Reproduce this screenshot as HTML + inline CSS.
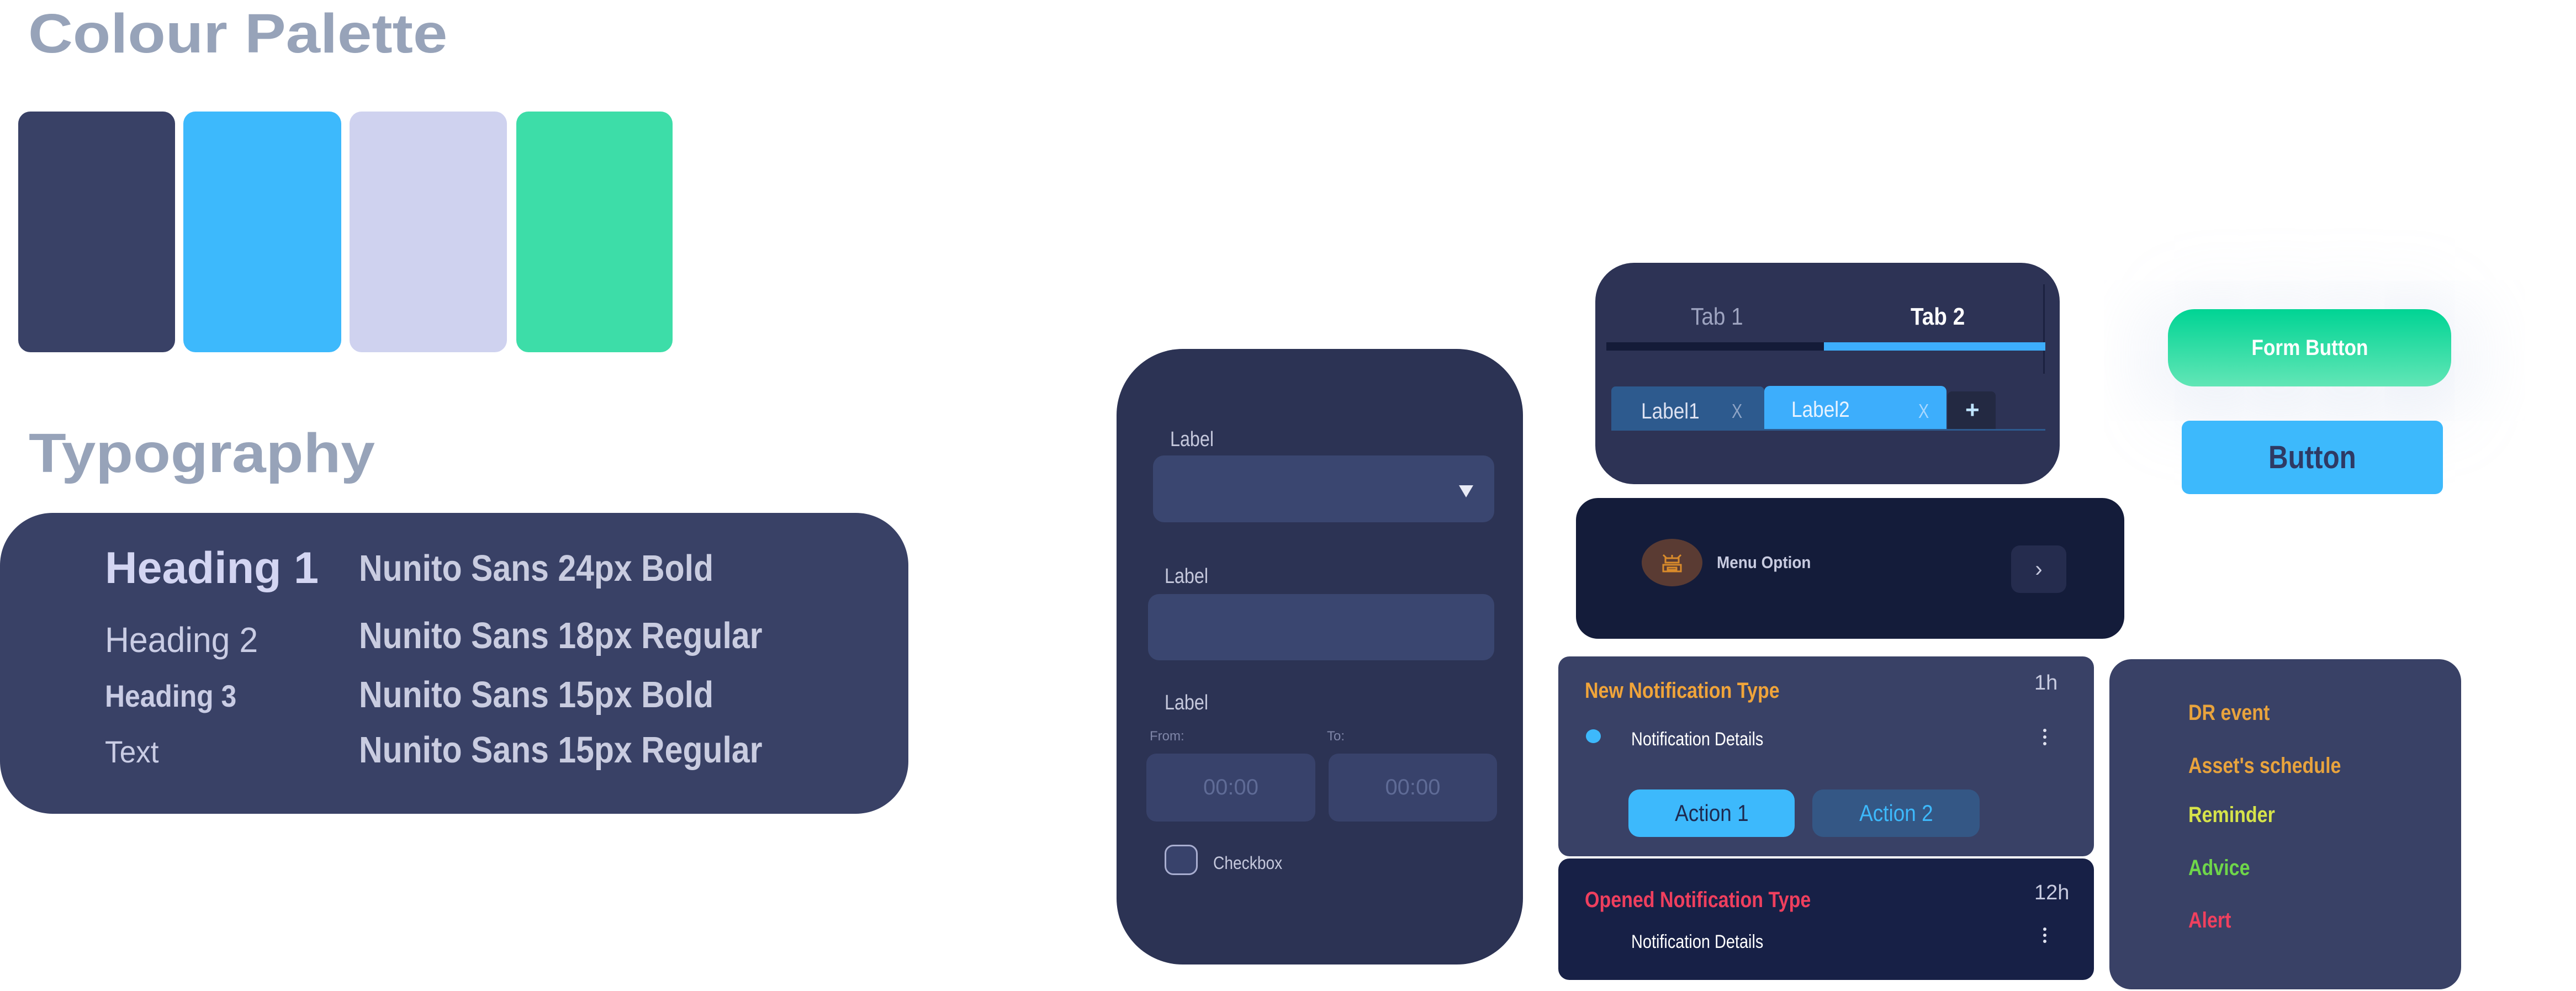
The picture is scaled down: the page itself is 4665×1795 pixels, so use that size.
<!DOCTYPE html>
<html style="width:4665px;height:1795px;overflow:hidden"><head><meta charset="utf-8"><style>
*{margin:0;padding:0;box-sizing:border-box}
body{width:4665px;height:1795px;background:#fff;position:relative;overflow:hidden;font-family:"Liberation Sans",sans-serif}
.a{position:absolute}
.t{position:absolute;line-height:1;white-space:nowrap;transform-origin:0 0}
.b{font-weight:bold}
.c{display:flex;align-items:center;justify-content:center}
</style></head><body>

<div class="t b" style="left:51px;top:11px;font-size:100px;color:#97a3b9;transform:scaleX(1.12)">Colour Palette</div>
<div class="a" style="left:33px;top:202px;width:284px;height:436px;background:#394166;border-radius:22px"></div>
<div class="a" style="left:332px;top:202px;width:286px;height:436px;background:#3db9fc;border-radius:22px"></div>
<div class="a" style="left:633px;top:202px;width:285px;height:436px;background:#cfd2ef;border-radius:22px"></div>
<div class="a" style="left:935px;top:202px;width:283px;height:436px;background:#3ddda8;border-radius:22px"></div>

<div class="t b" style="left:52px;top:771px;font-size:100px;color:#97a3b9;transform:scaleX(1.11)">Typography</div>
<div class="a" style="left:0;top:929px;width:1645px;height:545px;background:#394166;border-radius:95px"></div>
<div class="t b" style="left:190px;top:989px;font-size:81px;color:#d3d5f2">Heading 1</div>
<div class="t" style="left:190px;top:1127px;font-size:64px;color:#c9cce4;transform:scaleX(0.95)">Heading 2</div>
<div class="t b" style="left:190px;top:1233px;font-size:56px;color:#c9cce4;transform:scaleX(0.89)">Heading 3</div>
<div class="t" style="left:190px;top:1334px;font-size:56px;color:#c9cce4;transform:scaleX(0.95)">Text</div>
<div class="t b" style="left:650px;top:996px;font-size:67px;color:#c9cce0;transform:scaleX(0.88)">Nunito Sans 24px Bold</div>
<div class="t b" style="left:650px;top:1118px;font-size:67px;color:#c9cce0;transform:scaleX(0.88)">Nunito Sans 18px Regular</div>
<div class="t b" style="left:650px;top:1225px;font-size:67px;color:#c9cce0;transform:scaleX(0.88)">Nunito Sans 15px Bold</div>
<div class="t b" style="left:650px;top:1325px;font-size:67px;color:#c9cce0;transform:scaleX(0.88)">Nunito Sans 15px Regular</div>

<!-- form card -->
<div class="a" style="left:2022px;top:632px;width:736px;height:1115px;background:#2c3354;border-radius:120px"></div>
<div class="t" style="left:2119px;top:777px;font-size:38px;color:#c5c8dc;transform:scaleX(0.85)">Label</div>
<div class="a" style="left:2088px;top:825px;width:618px;height:121px;background:#3a4670;border-radius:20px"></div>
<svg class="a" style="left:2642px;top:879px" width="26" height="22"><path d="M0 0H26L13 22Z" fill="#e8eaf5"/></svg>
<div class="t" style="left:2109px;top:1025px;font-size:38px;color:#c5c8dc;transform:scaleX(0.85)">Label</div>
<div class="a" style="left:2079px;top:1076px;width:627px;height:120px;background:#3a4670;border-radius:20px"></div>
<div class="t" style="left:2109px;top:1254px;font-size:38px;color:#c5c8dc;transform:scaleX(0.85)">Label</div>
<div class="t" style="left:2082px;top:1322px;font-size:24px;color:#7f86a8">From:</div>
<div class="t" style="left:2403px;top:1322px;font-size:24px;color:#7f86a8">To:</div>
<div class="a c" style="left:2076px;top:1365px;width:306px;height:123px;background:#38426b;border-radius:18px;font-size:40px;color:#5f6b96">00:00</div>
<div class="a c" style="left:2406px;top:1365px;width:305px;height:123px;background:#38426b;border-radius:18px;font-size:40px;color:#5f6b96">00:00</div>
<div class="a" style="left:2109px;top:1530px;width:60px;height:55px;border:3px solid #a9aed0;border-radius:16px;background:#38426b"></div>
<div class="t" style="left:2197px;top:1547px;font-size:32px;color:#c5c8dc;transform:scaleX(0.88)">Checkbox</div>

<!-- tab card -->
<div class="a" style="left:2889px;top:476px;width:841px;height:401px;background:#2d3355;border-radius:70px"></div>
<div class="a" style="left:3700px;top:515px;width:3px;height:162px;background:#1c2240"></div>
<div class="t" style="left:3062px;top:552px;font-size:44px;color:#9ea4c0;transform:scaleX(0.88)">Tab 1</div>
<div class="t b" style="left:3460px;top:552px;font-size:44px;color:#fff;transform:scaleX(0.88)">Tab 2</div>
<div class="a" style="left:2909px;top:620px;width:394px;height:15px;background:#141b38"></div>
<div class="a" style="left:3303px;top:620px;width:401px;height:15px;background:#3daefc"></div>
<div class="a" style="left:2918px;top:700px;width:277px;height:79px;background:#2d5a8e;border-radius:8px 8px 0 0"></div>
<div class="a" style="left:3195px;top:699px;width:330px;height:80px;background:#3daefc;border-radius:10px 10px 0 0"></div>
<div class="a" style="left:3527px;top:709px;width:87px;height:70px;background:#232942;border-radius:8px 8px 0 0"></div>
<div class="a" style="left:2918px;top:777px;width:786px;height:3px;background:#2d5a8e"></div>
<div class="t" style="left:2972px;top:725px;font-size:40px;color:#dde2f2;transform:scaleX(0.88)">Label1</div>
<div class="t" style="left:3136px;top:727px;font-size:36px;color:#8ea4c6;transform:scaleX(0.8)">X</div>
<div class="t" style="left:3244px;top:722px;font-size:40px;color:#e8f3ff;transform:scaleX(0.88)">Label2</div>
<div class="t" style="left:3474px;top:727px;font-size:36px;color:#a8d8ff;transform:scaleX(0.8)">X</div>
<div class="t b" style="left:3559px;top:721px;font-size:44px;color:#bfe4ff">+</div>

<!-- buttons -->
<div class="a c b" style="left:3926px;top:560px;width:513px;height:140px;border-radius:48px;background:linear-gradient(#00d494,#62e6b6);box-shadow:0 20px 170px 40px rgba(170,185,225,0.22);font-size:40px;color:#fff"><span style="display:inline-block;transform:scaleX(0.88)">Form Button</span></div>
<div class="a c" style="left:3951px;top:762px;width:473px;height:133px;border-radius:14px;background:#3db9fc;font-size:58px;color:#2e3a64;font-weight:bold"><span style="display:inline-block;transform:scaleX(0.85)">Button</span></div>

<!-- menu -->
<div class="a" style="left:2854px;top:902px;width:993px;height:255px;background:#141c3a;border-radius:40px"></div>
<div class="a" style="left:2973px;top:976px;width:110px;height:86px;background:#5a3b33;border-radius:50%"></div>
<svg class="a" style="left:3008px;top:1003px" width="40" height="34" viewBox="0 0 40 34" fill="none" stroke="#d98b2b" stroke-width="3"><path d="M4 2l6 6M36 2l-6 6M20 2v5M8 8h24v8H8zM4 20h32v12H4zM12 25h16v4H12z"/></svg>
<div class="t b" style="left:3109px;top:1003px;font-size:31px;color:#c8cbe0;transform:scaleX(0.9)">Menu Option</div>
<div class="a c" style="left:3642px;top:988px;width:100px;height:86px;background:#252c4e;border-radius:16px;font-size:40px;color:#c8cbe0">›</div>

<!-- notification 1 -->
<div class="a" style="left:2822px;top:1189px;width:970px;height:362px;background:#394166;border-radius:20px"></div>
<div class="t b" style="left:2870px;top:1231px;font-size:40px;color:#f0a43a;transform:scaleX(0.85)">New Notification Type</div>
<div class="t" style="left:3684px;top:1218px;font-size:38px;color:#c8cbe0">1h</div>
<div class="a" style="left:2872px;top:1321px;width:27px;height:25px;border-radius:50%;background:#3db9fc"></div>
<div class="t" style="left:2954px;top:1322px;font-size:34px;color:#fff;transform:scaleX(0.85)">Notification Details</div>
<div class="a" style="left:3700px;top:1320px;width:6px;height:6px;border-radius:50%;background:#dfe1ef;box-shadow:0 12px 0 #dfe1ef,0 24px 0 #dfe1ef"></div>
<div class="a c" style="left:2949px;top:1430px;width:301px;height:86px;background:#3db9fc;border-radius:20px;font-size:42px;color:#1e2a50"><span style="display:inline-block;transform:scaleX(0.88)">Action 1</span></div>
<div class="a c" style="left:3282px;top:1430px;width:303px;height:86px;background:#345785;border-radius:20px;font-size:42px;color:#3db9fc"><span style="display:inline-block;transform:scaleX(0.88)">Action 2</span></div>

<!-- notification 2 -->
<div class="a" style="left:2822px;top:1555px;width:970px;height:220px;background:#172046;border-radius:20px"></div>
<div class="t b" style="left:2870px;top:1610px;font-size:40px;color:#ef3f5e;transform:scaleX(0.85)">Opened Notification Type</div>
<div class="t" style="left:3684px;top:1598px;font-size:38px;color:#c8cbe0">12h</div>
<div class="t" style="left:2954px;top:1689px;font-size:34px;color:#fff;transform:scaleX(0.85)">Notification Details</div>
<div class="a" style="left:3700px;top:1680px;width:6px;height:6px;border-radius:50%;background:#dfe1ef;box-shadow:0 11px 0 #dfe1ef,0 22px 0 #dfe1ef"></div>

<!-- list -->
<div class="a" style="left:3820px;top:1194px;width:637px;height:598px;background:#394166;border-radius:40px"></div>
<div class="t b" style="left:3963px;top:1271px;font-size:40px;color:#e8a33d;transform:scaleX(0.85)">DR event</div>
<div class="t b" style="left:3963px;top:1367px;font-size:40px;color:#e8a33d;transform:scaleX(0.85)">Asset's schedule</div>
<div class="t b" style="left:3963px;top:1456px;font-size:40px;color:#d6e34a;transform:scaleX(0.85)">Reminder</div>
<div class="t b" style="left:3963px;top:1552px;font-size:40px;color:#6fd64a;transform:scaleX(0.85)">Advice</div>
<div class="t b" style="left:3963px;top:1647px;font-size:40px;color:#f0405e;transform:scaleX(0.85)">Alert</div>

</body></html>
